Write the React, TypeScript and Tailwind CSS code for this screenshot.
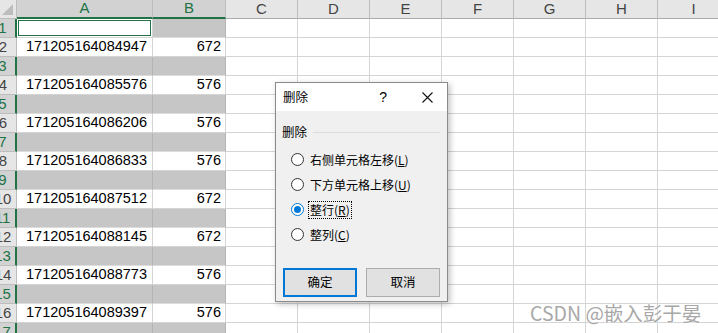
import React from "react";

const cols = [
  { name: "A", w: "w-[136px]", sel: true },
  { name: "B", w: "w-[73px]", sel: true },
  { name: "C", w: "w-[72px]", sel: false },
  { name: "D", w: "w-[72px]", sel: false },
  { name: "E", w: "w-[72px]", sel: false },
  { name: "F", w: "w-[72px]", sel: false },
  { name: "G", w: "w-[72px]", sel: false },
  { name: "H", w: "w-[72px]", sel: false },
  { name: "I", w: "w-[72px]", sel: false },
];

const values: Record<number, [string, string]> = {
  2: ["171205164084947", "672"],
  4: ["171205164085576", "576"],
  6: ["171205164086206", "576"],
  8: ["171205164086833", "576"],
  10: ["171205164087512", "672"],
  12: ["171205164088145", "672"],
  14: ["171205164088773", "576"],
  16: ["171205164089397", "576"],
};

const rows = Array.from({ length: 17 }, (_, i) => i + 1);

function HeaderRow() {
  return (
    <div className="flex h-[19px] shrink-0">
      <div className="relative w-[27px] shrink-0 bg-[#e6e6e6] border-r border-b border-[#bdbdbd]">
        <svg className="absolute right-[3px] bottom-[3px]" width="11" height="11" viewBox="0 0 11 11">
          <polygon points="11,0 11,11 0,11" fill="#bdbdbd" />
        </svg>
      </div>
      {cols.map((c) => (
        <div
          key={c.name}
          className={`${c.w} shrink-0 flex items-center justify-center border-r border-[#bdbdbd] text-[15px] ${
            c.sel
              ? "bg-[#d2d2d2] text-[#217346] border-b-2 border-b-[#217346]"
              : "bg-[#e6e6e6] text-[#444] border-b border-b-[#ababab]"
          }`}
        >
          {c.name}
        </div>
      ))}
    </div>
  );
}

function DataRow({ n }: { n: number }) {
  const odd = n % 2 === 1;
  const v = values[n];
  return (
    <div className="flex h-[19px] shrink-0">
      <div
        className={`w-[27px] shrink-0 flex items-center justify-center border-b border-[#bdbdbd] text-[15px] ${
          odd
            ? "bg-[#d2d2d2] text-[#217346] border-r-2 border-r-[#217346]"
            : "bg-[#e6e6e6] text-[#444] border-r border-r-[#bdbdbd]"
        }`}
      >
        {n}
      </div>
      {cols.map((c, i) => {
        if (odd && c.sel) {
          if (n === 1 && i === 0) {
            return (
              <div key={c.name} className={`${c.w} shrink-0 bg-white border-r border-b border-[#d4d4d4] p-[1px]`}>
                <div className="h-full w-full border border-[#217346]" />
              </div>
            );
          }
          return (
            <div
              key={c.name}
              className={`${c.w} shrink-0 bg-[#c6c6c6] border-r border-r-[#b4b4b4] border-b border-b-[#dcdcdc]`}
            />
          );
        }
        return (
          <div
            key={c.name}
            className={`${c.w} shrink-0 flex items-center border-r border-b border-[#d4d4d4] text-[14.5px] text-black ${
              i === 0 ? "justify-start pl-[9px]" : "justify-end pr-[4px]"
            }`}
          >
            {v && i === 0 ? v[0] : null}
            {v && i === 1 ? v[1] : null}
          </div>
        );
      })}
    </div>
  );
}

function Radio({ checked }: { checked?: boolean }) {
  return (
    <span
      className={`w-[13px] h-[13px] rounded-full bg-white border flex items-center justify-center shrink-0 ${
        checked ? "border-[#0078d7]" : "border-[#333]"
      }`}
    >
      {checked && <span className="w-[7px] h-[7px] rounded-full bg-[#0078d7]" />}
    </span>
  );
}

function DeleteDialog() {
  const options = [
    { label: "右侧单元格左移(", key: "L", checked: false },
    { label: "下方单元格上移(", key: "U", checked: false },
    { label: "整行(", key: "R", checked: true },
    { label: "整列(", key: "C", checked: false },
  ];
  return (
    <div className="absolute left-[275px] top-[82px] w-[173px] h-[220px] border border-[#8a8a8a] bg-[#f0f0f0] shadow-[2px_2px_6px_rgba(0,0,0,0.25)] flex flex-col font-['Noto_Sans_CJK_SC',sans-serif] text-black">
      <div className="h-[28px] bg-white flex items-center pl-[7px] pr-[14px] text-[12.5px]">
        <span className="flex-1">删除</span>
        <span className="mr-[35px] font-['Liberation_Sans',sans-serif] text-[14px]">?</span>
        <svg width="11" height="11" viewBox="0 0 11 11">
          <path d="M0.5 0.5 L10.5 10.5 M10.5 0.5 L0.5 10.5" stroke="#111" strokeWidth="1.1" />
        </svg>
      </div>
      <div className="flex items-center gap-[6px] pl-[6px] pr-[7px] mt-[12px] text-[12.5px]">
        <span>删除</span>
        <span className="flex-1 h-px bg-[#dcdcdc]" />
      </div>
      <div className="flex flex-col gap-[7px] pl-[15px] mt-[9px] text-[12px]">
        {options.map((o) => (
          <div key={o.key} className="flex items-center gap-[5px] h-[18px] overflow-visible">
            <Radio checked={o.checked} />
            <span className={`px-[1px] h-[16px] leading-[16px] ${o.checked ? "outline outline-1 outline-dotted outline-black" : ""}`}>
              {o.label}
              <span className="underline">{o.key}</span>)
            </span>
          </div>
        ))}
      </div>
      <div className="flex gap-[9px] pl-[7px] mt-[24px] text-[12.5px]">
        <button className="w-[74px] h-[29px] bg-[#e1e1e1] border-2 border-[#0078d7]">确定</button>
        <button className="w-[74px] h-[29px] bg-[#e1e1e1] border border-[#adadad]">取消</button>
      </div>
    </div>
  );
}

export default function App() {
  return (
    <div className="relative w-[718px] h-[333px] overflow-hidden bg-white font-['Liberation_Sans',sans-serif]">
      <div className="flex flex-col ml-[-10px]">
        <HeaderRow />
        {rows.map((n) => (
          <DataRow key={n} n={n} />
        ))}
      </div>
      <DeleteDialog />
      <div className="absolute left-[530px] top-[299px] text-[19.5px] leading-[28px] text-[#a8a8a8] font-['Noto_Sans_CJK_SC',sans-serif] [text-shadow:0_0_2px_white,0_0_2px_white]">
        CSDN @嵌入彭于晏
      </div>
    </div>
  );
}
